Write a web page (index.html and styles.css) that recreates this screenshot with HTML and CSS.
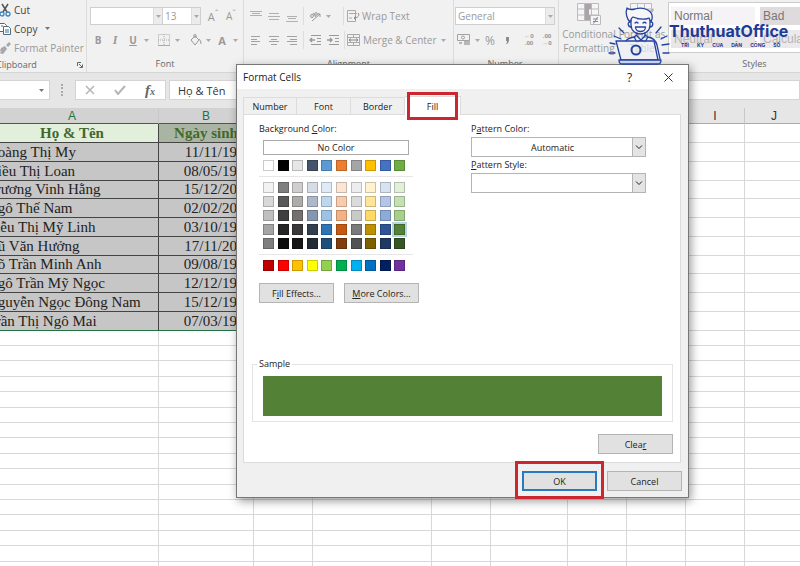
FILE: index.html
```html
<!DOCTYPE html>
<html lang="vi">
<head>
<meta charset="utf-8">
<title>Format Cells</title>
<link rel="stylesheet" href="styles.css">
</head>
<body>
<svg class="defs" aria-hidden="true">
  <symbol id="arr" viewBox="0 0 5 3"><path d="M0 0h5L2.500 3z"/></symbol>
  <symbol id="chev" viewBox="0 0 8 5"><path d="M1 .5l3 3 3-3" fill="none" stroke="currentColor"/></symbol>
  <symbol id="launch" viewBox="0 0 6 6"><path d="M.5 4V.5H4M2 2l3 3M5.500 2.500v3h-3" fill="none" stroke="currentColor"/></symbol>
</svg>
<div class="app">
  <header class="ribbon">
    <section class="group clip">
      <div class="tall">
        <button class="cmd dark"><svg width="14" height="14" viewBox="0 0 14 14" fill="none"><path d="M4 1l5 8M10 1L5 9" stroke="#555" stroke-width="1.500"/><circle cx="4" cy="11" r="2" stroke="#3d85c0" stroke-width="1.300"/><circle cx="10" cy="11" r="2" stroke="#3d85c0" stroke-width="1.300"/></svg>Cut</button>
        <button class="cmd dark"><svg width="14" height="14" viewBox="0 0 14 14" fill="#fff" stroke="#4a6d84"><path d="M1.500 1.500h5l2 2v6h-7z"/><path d="M5.500 4.500h5l2 2v6h-7zM7 8h4M7 10h4M3 4h2"/></svg>Copy<svg class="a" width="5" height="3"><use href="#arr"/></svg></button>
        <button class="cmd"><svg width="14" height="14" viewBox="0 0 14 14" fill="#a8a8a8"><path d="M3 7l4-2 2 3-4 5c-2 0-3-1-3-2l2-1-2 0z"/><path d="M8 4l3-3 2 2-3 3z"/></svg>Format Painter</button>
      </div>
      <h2>Clipboard <svg width="6" height="6"><use href="#launch"/></svg></h2>
    </section>
    <section class="group font">
      <div class="row">
        <span class="combo face"><select aria-label="Font"><option></option></select><i><svg width="5" height="3"><use href="#arr"/></svg></i></span>
        <span class="combo size"><select aria-label="Font size"><option>13</option></select><i><svg width="5" height="3"><use href="#arr"/></svg></i></span>
        <button class="b18 grow" aria-label="Increase font size">A<sup>ˆ</sup></button>
        <button class="b18 shrink" aria-label="Decrease font size">A<sup>ˇ</sup></button>
      </div>
      <div class="row">
        <button class="b16"><b>B</b></button>
        <button class="b18 it"><b>I</b></button>
        <button class="b18"><u><b>U</b></u></button>
        <svg class="a10" width="5" height="3"><use href="#arr"/></svg>
        <span class="sep"></span>
        <button class="b18" aria-label="Borders"><svg width="13" height="13" viewBox="0 0 13 13" fill="none" stroke="#aaa"><path d="M.5.5h11v11H.5zM6 0v12M0 6h12" stroke-dasharray="1 1"/><path d="M0 11.500h12"/></svg></button>
        <svg class="a10" width="5" height="3"><use href="#arr"/></svg>
        <span class="sep"></span>
        <button class="b18" aria-label="Fill color"><svg width="13" height="13" viewBox="0 0 13 13" fill="none" stroke="#999"><path d="M2 6l4-4 4 4-4 5zM5 4V1c0-1 2-1 2 0v3M10 5c1 1 2 2 2 5"/></svg></button>
        <svg class="a10" width="5" height="3"><use href="#arr"/></svg>
        <button class="b18 fc"><b>A</b></button>
        <svg class="a10" width="5" height="3"><use href="#arr"/></svg>
      </div>
      <h2>Font</h2>
    </section>
    <section class="group align">
      <div class="row">
        <button class="b18" aria-label="Top align"><svg width="12" height="12" viewBox="0 0 12 12"><path d="M0 1.500h12M2 3.500h8M0 5.500h12" stroke="#b0b0b0"/></svg></button>
        <button class="b18" aria-label="Middle align"><svg width="12" height="12" viewBox="0 0 12 12"><path d="M1 3.500h10M0 6.500h12M1 9.500h10" stroke="#b0b0b0"/></svg></button>
        <button class="b18" aria-label="Bottom align"><svg width="12" height="12" viewBox="0 0 12 12"><path d="M1 6.500h10M2 8.500h8M0 11.500h12" stroke="#b0b0b0"/></svg></button>
        <span class="sep"></span>
        <button class="b18" aria-label="Orientation"><svg width="13" height="12" viewBox="0 0 13 12" fill="none" stroke="#999"><path d="M3 11l8-7M8 4h3v3"/><circle cx="3" cy="6" r="1.500"/><path d="M4 3l3 4"/><circle cx="7" cy="4" r="1.300"/></svg></button>
        <svg class="a18" width="5" height="3"><use href="#arr"/></svg>
        <span class="sep"></span>
        <button class="cmd"><svg width="14" height="13" viewBox="0 0 14 13" fill="none" stroke="#aaa"><path d="M1.500.5h8v11h-8zM3 3.500h8M3 8h3"/><path d="M12 3c2 2 0 5-4 5M10 6L8 8l2 2" stroke="#888"/></svg>Wrap Text</button>
      </div>
      <div class="row">
        <button class="b18" aria-label="Align left"><svg width="10" height="9" viewBox="0 0 10 9"><path d="M0 .5h9M0 3.500h6M0 5.500h9M0 8.500h6" stroke="#a2a2a2"/></svg></button>
        <button class="b18" aria-label="Center"><svg width="10" height="9" viewBox="0 0 10 9"><path d="M0 .5h10M2 3.500h6M0 5.500h10M2 8.500h6" stroke="#a2a2a2"/></svg></button>
        <button class="b18" aria-label="Align right"><svg width="10" height="9" viewBox="0 0 10 9"><path d="M0 .5h10M3 3.500h7M0 5.500h10M3 8.500h7" stroke="#a2a2a2"/></svg></button>
        <span class="sep"></span>
        <button class="b18" aria-label="Decrease indent"><svg width="13" height="11" viewBox="0 0 13 11" fill="none" stroke="#999"><path d="M2 .5h10M8 3.500h4M8 6.500h4M2 9.500h10"/><path d="M6 5H1M3 3L1 5l2 2" stroke-width="1.400"/></svg></button>
        <button class="b18" aria-label="Increase indent"><svg width="13" height="11" viewBox="0 0 13 11" fill="none" stroke="#999"><path d="M2 .5h10M8 3.500h4M8 6.500h4M2 9.500h10"/><path d="M0 5h5M3 3l2 2-2 2" stroke-width="1.400"/></svg></button>
        <span class="sep"></span>
        <button class="cmd"><svg width="14" height="13" viewBox="0 0 14 13" fill="none" stroke="#aaa"><path d="M.5.5h12v11H.5zM.5 3.500h12M.5 8.500h12M6.500 0v3M6.500 9v3"/><path d="M2 6h9M4 4.500L2 6l2 1.500M9 4.500L11 6 9 7.500" stroke="#888"/></svg>Merge &amp; Center<svg class="a near" width="5" height="3"><use href="#arr"/></svg></button>
      </div>
      <h2>Alignment</h2>
    </section>
    <section class="group num">
      <div class="row">
        <span class="combo fmt"><select aria-label="Number format"><option>General</option></select><i><svg width="5" height="3"><use href="#arr"/></svg></i></span>
      </div>
      <div class="row">
        <button class="b18" aria-label="Accounting format"><svg width="14" height="12" viewBox="0 0 14 12" fill="none" stroke="#a2a2a2"><path d="M.5.5h12v6H.5z"/><circle cx="6" cy="3.500" r="1.500"/><path d="M7 8h6M7 10h6M2 9h3" stroke-width="1.500"/></svg></button>
        <svg class="a10" width="5" height="3"><use href="#arr"/></svg>
        <button class="b16 pct">%</button>
        <button class="b18" aria-label="Comma style"><svg width="5" height="7" viewBox="0 0 5 7"><path d="M1 0h3v3c0 2-1 3-2 4H1c1-1 1-2 1-3H1z" fill="#8c8c8c"/></svg></button>
        <span class="sep"></span>
        <button class="b18 dec"><span>←0</span><span>.00</span></button>
        <button class="b18 dec"><span>.00</span><span>→0</span></button>
      </div>
      <h2>Number</h2>
    </section>
    <section class="group styles">
      <div class="stylesrow">
        <button class="big"><svg width="26" height="24" viewBox="0 0 26 24" fill="none" stroke="#bbb"><path d="M1.500 1.500h21v17h-21zM1 7h21M1 13h21M8.500 1v17M15.500 1v17" fill="#f6f4f6"/><path d="M9 2h6v5H9zM9 7h4v6H9zM9 13h6v5H9z" fill="#a8a4a8" stroke="none"/><path d="M14.500 13.500h10v9h-10z" fill="#f6f4f6"/><path d="M17 17h5M17 19.500h5M21.500 15l-4 6.500" stroke="#888"/></svg><span>Conditional<br>Formatting</span></button>
        <button class="big"><svg width="26" height="24" viewBox="0 0 26 24" fill="none" stroke="#bbb"><path d="M1.500 1.500h21v17h-21zM1 7h21M1 13h21M8.500 1v17M15.500 1v17" fill="#f6f4f6"/><path d="M9 7h13v11H9z" fill="#d8d4d8" stroke="none"/><path d="M24 6l-8 9-2 5 5-3 6-9z" fill="#b5b0b5" stroke="none"/></svg><span>Format as<br>Table</span></button>
        <div class="gallery">
          <button>Normal</button><button class="bad">Bad</button>
          <button class="neu">Neutral</button><button class="calc">Calculation</button>
        </div>
      </div>
      <h2>Styles</h2>
    </section>
  </header>

  <div class="fbar">
    <span class="namebox"><svg width="5" height="3"><use href="#arr"/></svg></span>
    <span class="dots"></span>
    <span class="fx">
      <svg width="10" height="10" viewBox="0 0 10 10"><path d="M1 1l8 8M9 1L1 9" stroke="#b5b5b5" stroke-width="1.500"/></svg>
      <svg width="12" height="10" viewBox="0 0 12 10"><path d="M1 5l3 4 7-8" stroke="#b5b5b5" stroke-width="2" fill="none"/></svg>
      <i>f<small>x</small></i>
    </span>
    <input class="finput" aria-label="Formula" value="Họ &amp; Tên">
  </div>

  <table class="sheet">
    <colgroup><col class="ca"><col class="cb"><col class="c59"><col class="cd"><col class="c59"><col class="cf"><col class="c59"><col class="c59"><col class="c59"><col class="c59"></colgroup>
    <thead><tr><th class="on">A</th><th class="on">B</th><th>C</th><th>D</th><th>E</th><th>F</th><th>G</th><th>H</th><th>I</th><th>J</th></tr></thead>
    <tbody class="data">
      <tr class="head"><td>Họ &amp; Tên</td><td>Ngày sinh</td></tr>
      <tr><td>Hoàng Thị My</td><td>11/11/1999</td></tr>
      <tr><td>Kiều Thị Loan</td><td>08/05/1998</td></tr>
      <tr><td>Trương Vinh Hằng</td><td>15/12/2000</td></tr>
      <tr><td>Ngô Thế Nam</td><td>02/02/2000</td></tr>
      <tr><td>Liễu Thị Mỹ Linh</td><td>03/10/1999</td></tr>
      <tr><td>Vũ Văn Hưởng</td><td>17/11/2000</td></tr>
      <tr><td>Võ Trần Minh Anh</td><td>09/08/1999</td></tr>
      <tr><td>Ngô Trần Mỹ Ngọc</td><td>12/12/1998</td></tr>
      <tr><td>Nguyễn Ngọc Đông Nam</td><td>15/12/1999</td></tr>
      <tr><td>Trần Thị Ngô Mai</td><td>07/03/1999</td></tr>
    </tbody>
    <tbody class="blank"></tbody>
  </table>
</div>

<div class="brand">
  <svg width="60" height="60" viewBox="0 0 60 60" fill="none" stroke="#2443a0" stroke-width="1.300" stroke-linecap="round" stroke-linejoin="round">
    <path d="M20 15v5c0 6 5 9 9.500 9s9.500-3 9.500-9v-5" fill="#f6f6fa"/>
    <path d="M19 17c-3-3-5-9-3-14 2 2 4 2 8 1 7-2 15 0 17 6 1 3 0 5-1 7l-2-4c-5 2-11 1-16-1-2 1-2 3-3 5z" fill="#f6f6fa"/>
    <path d="M19 17c-3 0-2 5 1 5M40 17c3 0 2 5-1 5M24 18c1-1 2-1 3 0M32 18c1-1 2-1 3 0M24.500 22h10c0 6-10 6-10 0z"/>
    <path d="M26 28v3l4 4 4-4v-3M26 30l-3 2 3 5 4-2 4 2 3-5-3-2M23 32c-5 1-7 2-8 4M37 32c6 1 8 4 9 8l3 14"/>
    <path d="M5 36h38l4 19H10z" fill="#eef0f7aa"/>
    <circle cx="25" cy="45" r="4.500" stroke-width="2"/>
    <path d="M8 55h42c0 3-1 4-3 4H11c-2 0-3-1-3-4z" fill="#c9d2ee"/>
    <path d="M8 23l5 5M3 31l7 3M-1 38l5 1M-2 48h6M50 22l-5 6M56 31l-6 3M51 40l7-1M52 48h6"/>
  </svg>
  <div><strong>ThuthuatOffice</strong><p><span>TRI</span><span>KỶ</span><span>CỦA</span><span>DÂN</span><span>CÔNG</span><span>SỐ</span></p></div>
</div>

<form class="dialog" role="dialog" aria-label="Format Cells">
  <div class="title"><h1>Format Cells</h1><button type="button">?</button><button type="button" aria-label="Close"><svg width="9" height="9" viewBox="0 0 9 9"><path d="M.5.5l8 8M8.500.5l-8 8" stroke="#333"/></svg></button></div>
  <div class="tabs"><button type="button">Number</button><button type="button">Font</button><button type="button">Border</button><button type="button" class="cur">Fill<span class="mark"></span></button></div>
  <div class="panel">
    <div class="cols">
      <div class="left">
        <p class="lbl">Background <u>C</u>olor:</p>
        <div class="palette">
          <button type="button" class="none">No Color</button>
          <div class="sw" id="theme"></div>
          <hr>
          <div class="sw" id="tints"></div>
          <hr>
          <div class="sw" id="standard"></div>
        </div>
        <div class="btns"><button type="button" class="btn">F<u>i</u>ll Effects...</button><button type="button" class="btn"><u>M</u>ore Colors...</button></div>
      </div>
      <div class="right">
        <label class="lbl" for="pc">P<u>a</u>ttern Color:</label>
        <span class="drop"><select id="pc"><option>Automatic</option></select><i><svg width="8" height="5"><use href="#chev"/></svg></i></span>
        <label class="lbl" for="ps"><u>P</u>attern Style:</label>
        <span class="drop"><select id="ps"><option></option></select><i><svg width="8" height="5"><use href="#chev"/></svg></i></span>
      </div>
    </div>
    <fieldset><legend>Sample</legend><div class="sample"></div></fieldset>
    <button type="button" class="btn clear">Clea<u>r</u></button>
  </div>
  <div class="foot"><button type="button" class="btn ok">OK<span class="mark"></span></button><button type="button" class="btn">Cancel</button></div>
</form>
<script src="script.js"></script>
</body>
</html>
```
FILE: styles.css
```css
* { box-sizing: border-box; }
body { margin: 0; height: 100vh; overflow: hidden; position: relative; background: #fff; font-family: "Open Sans", "Noto Sans", sans-serif; font-size: 10px; color: #444; }
button, input, select { font: inherit; color: inherit; border: 0; padding: 0; margin: 0; background: none; border-radius: 0; }
select { appearance: none; min-width: 0; }
h1, h2, p { margin: 0; font-weight: 400; }
.defs { position: absolute; width: 0; height: 0; }
svg { flex: none; }

/* the window is scrolled slightly to the right */
.app { margin-left: -14px; background: #e6e6e6; overflow: hidden; }

.ribbon { display: flex; height: 73px; background: #f1f1f1; border-bottom: 1px solid #d5d5d5; color: #999; }
.group { flex: none; display: flex; flex-direction: column; padding: 4px 3px 0; border-right: 1px solid #dcdcdc; fill: #aaa; }
.group h2 { margin-top: auto; height: 15px; line-height: 14px; font-size: 9px; color: #666; text-align: center; }
.clip { width: 101px; padding-top: 0; }
.clip h2 { display: flex; justify-content: space-between; align-items: center; padding-left: 7px; }
.font { width: 157px; }
.align { width: 210px; }
.num { width: 105px; padding-left: 1px; }
.styles { width: 392px; padding-top: 2px; }
.tall { display: grid; grid-auto-rows: 19px; }
.row { display: flex; align-items: center; height: 24px; }
.cmd { display: flex; align-items: center; gap: 2px; white-space: nowrap; }
.clip .cmd { padding-left: 9px; }
.dark { color: #444; fill: #777; }
.a { margin-left: 6px; }
.near { margin-left: 2px; }
.b18, .b16 { width: 18px; flex: none; display: flex; justify-content: center; align-items: center; }
.b16 { width: 16px; }
.a10 { margin: 0 2px; }
.a18 { margin: 0 6px 0 2px; }
.a18 + .sep { margin-left: 6px; }
.sep { width: 1px; height: 18px; margin: 0 2px; background: #ddd; }
.it { font-family: "Liberation Serif", serif; font-style: italic; font-size: 12px; }
.grow { margin-left: 3px; font-size: 11px; }
.fc { font-size: 11px; }
.shrink { font-size: 10px; }
.b18 sup { font-size: 9px; line-height: 9px; align-self: flex-start; }
.combo { display: flex; height: 18px; background: #fff; border: 1px solid #cfcfcf; }
.combo select { flex: 1; padding-left: 2px; }
.combo i { width: 9px; display: flex; align-items: center; justify-content: center; background: #ececec; border-left: 1px solid #ddd; }
.face { width: 77px; }
.size { width: 41px; margin-left: -1px; }
.fmt { width: 102px; }
.pct { font-size: 12px; }
.dec { flex-direction: column; font-size: 6px; line-height: 7px; font-weight: 700; }
.stylesrow { display: flex; }
.big { width: 52px; margin-left: 1px; display: flex; flex-direction: column; align-items: center; gap: 1px; line-height: 14px; white-space: nowrap; }
.big span { display: block; }
.gallery { flex: 1; height: 51px; padding: 4px 2px; background: #fff; border: 1px solid #ccc; display: grid; grid-template: 18px 18px / 84px 1fr; gap: 5px; font-family: "Liberation Sans", Arial, sans-serif; font-size: 12px; color: #777; }
.gallery button { text-align: left; padding-left: 3px; background: #f5f3f5; }
.gallery .bad { background: #dfdbdd; }
.gallery .neu { background: #e9e6e8; color: #b4b4b4; }
.gallery .calc { background: #ebe9eb; color: #b4b4b4; }

.fbar { display: flex; height: 28px; margin-top: 7px; font-size: 11px; fill: #777; }
.fbar > * { height: 20px; background: #fff; border: 1px solid #d4d4d4; }
.namebox { width: 64px; display: flex; align-items: center; justify-content: flex-end; padding-right: 5px; }
.fbar .dots { width: 3px; height: 12px; margin: 4px 11px 0; background: none; border: 0; border-left: 2px dotted #aaa; }
.fx { width: 91px; display: flex; align-items: center; justify-content: space-between; padding: 0 10px 0 9px; }
.fx i { font: italic 700 15px "Liberation Serif", serif; color: #666; }
.fx small { font-size: 10px; }
.fbar .finput { flex: 1; margin-left: 3px; padding-left: 8px; color: #333; }

.sheet { table-layout: fixed; width: 818px; border-collapse: separate; border-spacing: 0; background: #fff; }
.ca { width: 173px; } .cb { width: 95px; } .c59 { width: 59px; } .cd { width: 119px; } .cf { width: 77px; }
.sheet th { height: 16px; padding: 0; font: 12px/14px "Liberation Sans", Arial, sans-serif; color: #333; background: #e6e6e6; border-right: 1px solid #c8c8c8; border-bottom: 1px solid #ababab; }
.sheet .on { background: #d2d2d2; color: #217346; border-bottom: 1px solid #217346; }
.sheet td { padding: 0 1px; border-right: 1px solid #d8d8d8; border-bottom: 1px solid #d8d8d8; white-space: nowrap; overflow: hidden; }
.data tr { height: 19px; }
.data tr:nth-child(4n) { height: 18px; }
.data td { font: 15px/17px "Liberation Serif", "Times New Roman", serif; color: #222; }
.data td:nth-child(-n+2) { background: #c6c6c6; border-color: #444; }
.data td:nth-child(2) { text-align: right; }
.data tr:last-child td:nth-child(-n+2) { border-bottom: 1px solid #217346; }
.data .head td { font-weight: 700; color: #44682a; text-align: center; }
.data .head td:first-child { background: #e2efda; }
.data .head td:nth-child(2) { background: #a9b5a2; }
.blank tr { height: 15px; }
.blank tr:nth-child(5n), .blank tr:nth-child(5n+3) { height: 16px; }

.brand { position: absolute; z-index: 3; left: 611px; top: 5px; display: flex; color: #1d3a94; }
.brand svg { overflow: visible; }
.brand div { margin: 16px 0 0 -2px; }
.brand strong { display: block; font: 700 16px/20px Inter, sans-serif; }
.brand p { display: flex; justify-content: space-between; padding: 0 8px 0 12px; font: 700 5px/9px Inter, sans-serif; }

.dialog { position: absolute; z-index: 2; left: 236px; top: 64px; width: 453px; display: flex; flex-direction: column; background: #f0f0f0; border: 1px solid #777; box-shadow: 2px 3px 9px #0006; font-size: 9px; color: #222; }
.title { height: 24px; display: flex; align-items: center; background: #fff; padding-left: 6px; font-size: 12px; }
.title h1 { flex: 1; font-size: 10px; }
.title button { width: 39px; display: flex; justify-content: center; }
.tabs { display: flex; margin: 7px 7px 0 6px; align-items: flex-end; }
.tabs button { width: 54px; height: 17px; border: 1px solid #dcdcdc; border-width: 1px 1px 0 0; }
.tabs button:first-child { border-left-width: 1px; }
.tabs .cur { position: relative; z-index: 1; height: 19px; margin-bottom: -1px; width: 56px; background: #fff; }
.mark { position: absolute; border: 3px solid #cc2630; pointer-events: none; }
.tabs .mark { inset: -5px 2px; }
.panel { display: flex; flex-direction: column; margin: 0 7px 0 6px; padding: 6px 7px 8px 8px; height: 349px; background: #fff; border: 1px solid #dcdcdc; }
.cols { display: flex; padding-left: 7px; }
.left { width: 212px; }
.lbl { display: block; height: 16px; line-height: 16px; }
.palette { width: 154px; padding: 3px 4px 0; }
.palette .none { display: block; width: 146px; height: 15px; border: 1px solid #aaa; line-height: 12px; }
.palette hr { margin: 5px -4px; border: 0; border-top: 1px solid #e6e6e6; }
.sw { display: grid; grid-template-columns: repeat(10, 1fr); row-gap: 3px; }
.none + .sw { margin-top: 5px; }
.sw button { width: 11px; height: 11px; border: 1px solid #0003; }
.sw .sel { outline: 2px solid #b9d7e6; }
.btns { display: flex; gap: 10px; margin-top: 12px; }
.btn { width: 75px; height: 20px; background: #e1e1e1; border: 1px solid #b4b4b4; }
.right { width: 175px; }
.drop { display: flex; height: 20px; border: 1px solid #b4b4b4; background: #fff; }
.drop select { flex: 1; text-align: center; text-align-last: center; }
.drop i { width: 14px; display: flex; align-items: center; justify-content: center; background: #e4e4e4; border: 1px solid #b4b4b4; margin: -1px; }
fieldset { margin: auto 0 0; padding: 6px 10px; height: 64px; border: 1px solid #e4e4e4; min-width: 0; }
legend { padding: 0 2px; margin-left: -6px; line-height: 12px; }
.sample { height: 40px; background: #538135; }
.clear { align-self: flex-end; margin-top: 12px; }
.foot { display: flex; justify-content: flex-end; gap: 10px; padding: 8px 6px 6px; }
.ok { position: relative; border: 2px solid #2a78bd; }
.ok .mark { inset: -12px -9px -10px; }
```
FILE: script.js
```js
const palettes = {
  theme: "ffffff 000000 e7e6e6 44546a 5b9bd5 ed7d31 a5a5a5 ffc000 4472c4 70ad47",
  tints: "f2f2f2 7f7f7f d0cece d6dce4 deebf6 fbe5d5 ededed fff2cc d9e2f3 e2efd9 " +
    "d8d8d8 595959 aeabab adb9ca bdd7ee f7cbac dbdbdb fee599 b4c6e7 c5e0b3 " +
    "bfbfbf 3f3f3f 757070 8496b0 9cc3e5 f4b183 c9c9c9 ffd965 8eaadb a8d08d " +
    "a5a5a5 262626 3a3838 323f4f 2e75b5 c55a11 7b7b7b bf9000 2f5496 538135 " +
    "7f7f7f 0c0c0c 171616 222a35 1e4e79 833c0b 525252 7f6000 1f3864 375623",
  standard: "c00000 ff0000 ffc000 ffff00 92d050 00b050 00b0f0 0070c0 002060 7030a0"
};
for (const [id, list] of Object.entries(palettes)) {
  for (const c of list.split(" ")) {
    const b = document.createElement("button");
    b.type = "button";
    b.setAttribute("aria-label", "#" + c);
    b.style.background = "#" + c;
    if (c === "538135") b.className = "sel";
    document.getElementById(id).append(b);
  }
}
document.querySelectorAll(".data tr").forEach(r => { while (r.cells.length < 10) r.insertCell(); });
const blank = document.querySelector(".blank");
for (let i = 0; i < 16; i++) {
  const r = blank.insertRow();
  for (let j = 0; j < 10; j++) r.insertCell();
}
```
